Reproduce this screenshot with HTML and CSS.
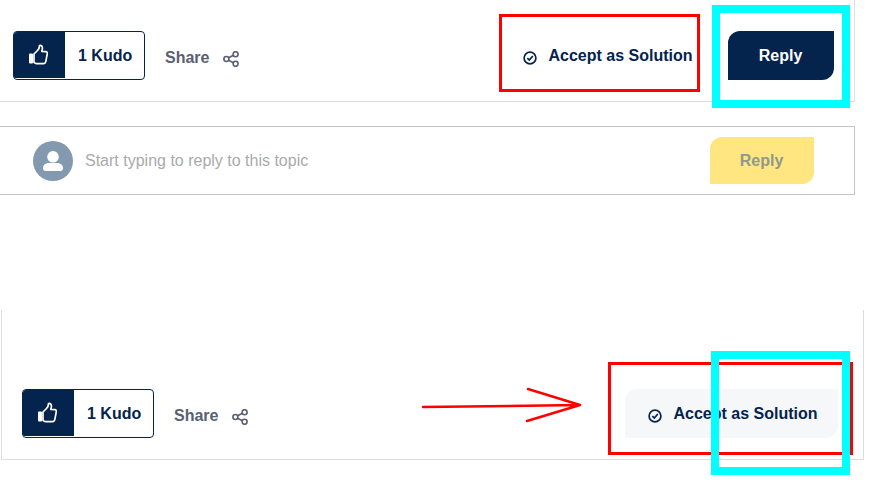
FILE: index.html
```html
<!DOCTYPE html>
<html lang="en">
<head>
<meta charset="utf-8">
<title>Reply actions</title>
<link rel="stylesheet" href="styles.css">
</head>
<body>
<section class="post post-top">
  <div class="kudo">
    <span class="kudo-thumb"><svg class="thumb" viewBox="0 0 20 21"><rect x="1" y="9.5" width="4" height="10" rx="1" fill="#fff"/><path d="M6 10 L9.5 6.5 C11 5 11.5 3.5 11.5 1.5 C13.5 1 14.6 2.6 14.4 4.6 L13.8 7.5 L18 7.6 C19.3 7.8 19.6 9 19.2 10.2 L17.8 17.6 C17.5 19 16.6 19.6 15.4 19.6 L8.5 19.6 C7.3 19.6 6.6 19 6 18.4 Z" fill="none" stroke="#fff" stroke-width="1.7" stroke-linejoin="round"/></svg></span>
    <span class="kudo-count">1 Kudo</span>
  </div>
  <div class="share"><span>Share</span><svg class="share-icon" viewBox="0 0 16 16"><circle cx="3.4" cy="8" r="2.5"/><circle cx="12.6" cy="3.2" r="2.5"/><circle cx="12.6" cy="12.8" r="2.5"/><path d="M5.6 6.8 L10.4 4.3 M5.6 9.2 L10.4 11.7"/></svg></div>
  <div class="accept">
    <svg class="check-icon" viewBox="0 0 14 14"><circle cx="7" cy="7" r="5.9"/><path d="M4.3 7.2 L6.3 9.1 L9.8 5"/></svg>
    <span>Accept as Solution</span>
  </div>
  <button class="btn-reply">Reply</button>
</section>

<section class="editor">
  <span class="avatar"><svg viewBox="0 0 40 40"><circle cx="20" cy="15.8" r="5.8" fill="#fff"/><path d="M10 27 C10 23.5 13 22 16 22 L24 22 C27 22 30 23.5 30 27 C30 29 29 30 27.5 30 L12.5 30 C11 30 10 29 10 27 Z" fill="#fff"/></svg></span>
  <span class="placeholder">Start typing to reply to this topic</span>
  <button class="btn-reply btn-disabled">Reply</button>
</section>

<section class="post post-bottom">
  <div class="kudo">
    <span class="kudo-thumb"><svg class="thumb" viewBox="0 0 20 21"><rect x="1" y="9.5" width="4" height="10" rx="1" fill="#fff"/><path d="M6 10 L9.5 6.5 C11 5 11.5 3.5 11.5 1.5 C13.5 1 14.6 2.6 14.4 4.6 L13.8 7.5 L18 7.6 C19.3 7.8 19.6 9 19.2 10.2 L17.8 17.6 C17.5 19 16.6 19.6 15.4 19.6 L8.5 19.6 C7.3 19.6 6.6 19 6 18.4 Z" fill="none" stroke="#fff" stroke-width="1.7" stroke-linejoin="round"/></svg></span>
    <span class="kudo-count">1 Kudo</span>
  </div>
  <div class="share"><span>Share</span><svg class="share-icon" viewBox="0 0 16 16"><circle cx="3.4" cy="8" r="2.5"/><circle cx="12.6" cy="3.2" r="2.5"/><circle cx="12.6" cy="12.8" r="2.5"/><path d="M5.6 6.8 L10.4 4.3 M5.6 9.2 L10.4 11.7"/></svg></div>
  <div class="accept accept-filled">
    <svg class="check-icon" viewBox="0 0 14 14"><circle cx="7" cy="7" r="5.9"/><path d="M4.3 7.2 L6.3 9.1 L9.8 5"/></svg>
    <span>Accept as Solution</span>
  </div>
</section>

<div class="mark mark-red mark-red-top"></div>
<div class="mark mark-cyan mark-cyan-top"></div>
<div class="mark mark-red mark-red-bottom"></div>
<div class="mark mark-cyan mark-cyan-bottom"></div>
<svg class="arrow" viewBox="0 0 170 40"><path d="M2 20 L159 18 M107 2 L159 18 L106 34"/></svg>
</body>
</html>
```

FILE: styles.css
```css
* { box-sizing: border-box; }

html, body {
  margin: 0;
  padding: 0;
  height: 497px;
  overflow: hidden;
  background: #fff;
}

body {
  position: relative;
  font-family: "Liberation Sans", Arial, sans-serif;
  font-size: 16px;
  font-weight: 700;
  color: #04234d;
}

.post {
  display: flex;
  align-items: flex-start;
  border-right: 1px solid #ddd;
  border-bottom: 1px solid #ddd;
}

.post-top {
  width: 855px;
  height: 102px;
  padding: 31px 20px 0 13px;
}

.post-bottom {
  width: 863px;
  height: 150px;
  margin: 115px 0 0 1px;
  padding: 79px 25px 0 20px;
  border-left: 1px solid #ddd;
}

.kudo {
  width: 132px;
  height: 49px;
  flex: none;
  display: flex;
  border: 1px solid #04234d;
  border-radius: 4px;
  overflow: hidden;
}

.kudo-thumb {
  width: 51px;
  height: 46px;
  flex: none;
  display: flex;
  align-items: center;
  justify-content: center;
  background: #04234d;
}

.thumb { width: 20px; height: 21px; margin: -2px 0 0 -3px; }

.kudo-count {
  height: 46px;
  line-height: 48px;
  margin-left: 13px;
  white-space: nowrap;
}

.share {
  display: flex;
  align-items: center;
  height: 54px;
  margin-left: 20px;
  color: #5a6072;
}

.share-icon {
  width: 16px;
  height: 16px;
  margin: 1px 0 0 14px;
  fill: none;
  stroke: #5a6072;
  stroke-width: 1.6;
}

.accept {
  width: 213px;
  height: 49px;
  flex: none;
  margin-left: auto;
  display: flex;
  align-items: center;
  padding: 0 0 0 23px;
  white-space: nowrap;
  border-radius: 12px 0 12px 0;
}

.accept-filled { background: #f5f7f9; }

.check-icon {
  width: 14px;
  height: 14px;
  margin: 4px 11.5px 0 0;
  fill: none;
  stroke: #04234d;
  stroke-width: 1.7;
}

.btn-reply {
  width: 106px;
  height: 49px;
  flex: none;
  margin-left: 15px;
  padding: 0 1px 0 0;
  border: 0;
  border-radius: 12px 0 12px 0;
  background: #04234d;
  color: #fff;
  font: inherit;
}

.editor {
  width: 855px;
  height: 69px;
  margin-top: 24px;
  display: flex;
  align-items: center;
  padding: 0 40px 0 33px;
  border: 1px solid #c4c4c4;
  border-left: 0;
}

.avatar {
  width: 40px;
  height: 40px;
  flex: none;
  border-radius: 50%;
  background: #8399b0;
}

.avatar svg { display: block; width: 40px; height: 40px; }

.placeholder {
  margin-left: 12px;
  font-weight: 400;
  color: #aaa;
}

.btn-disabled {
  width: 104px;
  height: 47px;
  margin-left: auto;
  background: #ffe680;
  color: #8f998c;
}

.mark { position: absolute; }

.mark-red { border: 3px solid #f00; }

.mark-cyan { border: 8px solid #0ff; }

.mark-red-top { left: 499px; top: 14px; width: 201px; height: 78px; }

.mark-cyan-top { left: 712px; top: 5px; width: 138px; height: 103px; }

.mark-red-bottom { left: 608px; top: 362px; width: 245px; height: 93px; }

.mark-cyan-bottom { left: 711px; top: 351px; width: 139px; height: 124px; }

.arrow {
  position: absolute;
  left: 421px;
  top: 387px;
  width: 170px;
  height: 40px;
  fill: none;
  stroke: #f00;
  stroke-width: 2.5;
  stroke-linecap: round;
  stroke-linejoin: round;
}
```
